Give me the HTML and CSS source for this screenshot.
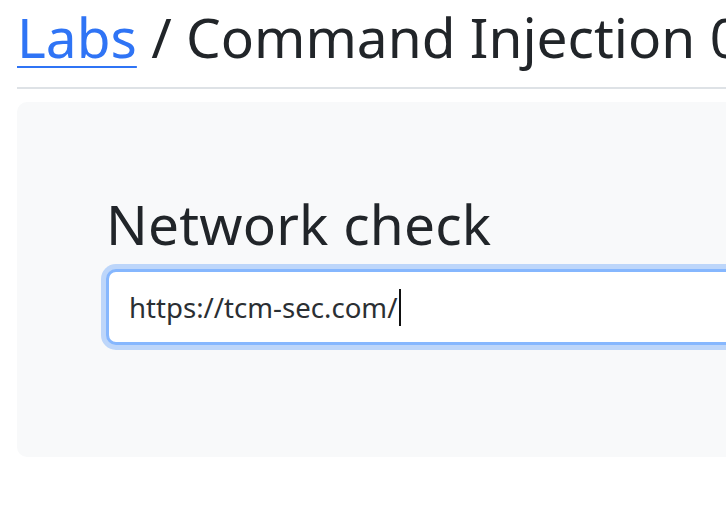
FILE: index.html
```html
<!DOCTYPE html>
<html lang="en">
<head>
<meta charset="utf-8">
<title>Command Injection</title>
<link rel="stylesheet" href="styles.css">
</head>
<body>
<div class="page">
  <h1 class="title"><a class="crumb" href="#">Labs</a> / Command Injection 0x01</h1>
  <hr class="rule">
  <section class="panel">
    <h2 class="panel-title">Network check</h2>
    <form class="check-form">
      <div class="field" role="textbox" aria-label="URL"><span class="field-value">https://tcm-sec.com/</span><span class="caret"></span></div>
    </form>
  </section>
</div>
</body>
</html>
```

FILE: styles.css
```css
html, body {
  margin: 0;
  padding: 0;
  background: #ffffff;
  overflow: hidden;
}

body {
  font-family: "Noto Sans", "Open Sans", sans-serif;
  color: #212529;
}

.page {
  padding: 4px 0 0 17px;
  width: 1200px;
}

.title {
  margin: 0;
  font-size: 55px;
  font-weight: 400;
  line-height: 66px;
  white-space: nowrap;
}

.crumb {
  color: #2f74f5;
  text-decoration: underline;
  text-decoration-thickness: 2px;
  text-underline-offset: 8px;
}

.rule {
  margin: 17px 0 0 0;
  border: 0;
  height: 2px;
  background: #dee2e6;
}

.panel {
  margin-top: 13px;
  background: #f8f9fa;
  border-radius: 10px;
  padding: 90px 0 112px 89px;
}

.panel-title {
  margin: 0;
  font-size: 55px;
  font-weight: 400;
  line-height: 63px;
  letter-spacing: 0.2px;
}

.check-form {
  margin: 14px 0 0 0;
}

.field {
  box-sizing: border-box;
  height: 76px;
  width: 900px;
  display: flex;
  align-items: center;
  padding: 0 20px;
  background: #ffffff;
  border: 3px solid #86b7fe;
  border-radius: 10px;
  box-shadow: 0 0 0 5px rgba(13, 110, 253, 0.25);
  font-size: 27.6px;
  color: #2b2f33;
}

.caret {
  display: inline-block;
  width: 2px;
  height: 37px;
  margin-left: 2px;
  background: #111111;
}
```
